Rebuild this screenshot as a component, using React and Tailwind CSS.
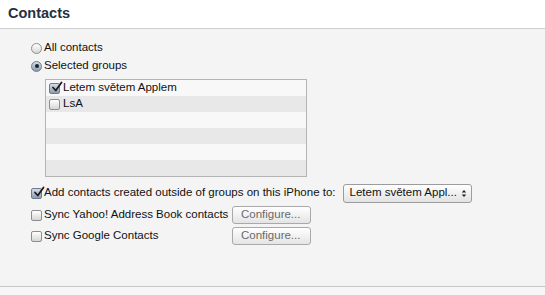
const font = { fontFamily: '"Liberation Sans", Arial, sans-serif' }

const Radio = ({ checked }) => (
  <span
    className={
      'flex h-[11px] w-[11px] shrink-0 items-center justify-center rounded-full border ' +
      (checked
        ? 'border-[#6f7c8c] bg-gradient-to-b from-[#d5dde7] to-[#8d9cb0]'
        : 'border-[#8e8e8e] bg-gradient-to-b from-white to-[#d6d6d6]')
    }
  >
    {checked && <span className="h-[4px] w-[4px] rounded-full bg-[#1c2430]" />}
  </span>
)

const Checkbox = ({ checked }) => (
  <span
    className={
      'relative flex h-[11px] w-[11px] shrink-0 items-center justify-center rounded-[2px] border ' +
      (checked
        ? 'border-[#6f7c8c] bg-gradient-to-b from-[#d5dde7] to-[#8d9cb0]'
        : 'border-[#8e8e8e] bg-gradient-to-b from-white to-[#d6d6d6]')
    }
  >
    {checked && (
      <svg viewBox="0 0 12 12" className="absolute -top-[3px] left-[1px] h-[12px] w-[12px]">
        <path d="M2 6.5 L4.8 9.5 L10.5 1.5" fill="none" stroke="#1a1a1a" strokeWidth="1.8" strokeLinecap="round" strokeLinejoin="round" />
      </svg>
    )}
  </span>
)

const Button = ({ children }) => (
  <button className="flex h-[18px] w-[79px] items-center rounded-[3px] border border-[#a9a9a9] bg-gradient-to-b from-white to-[#e4e4e4] pl-[8px] text-[11.5px] text-[#6a6a6a]">
    {children}
  </button>
)

const rows = [
  { label: 'Letem světem Applem', checked: true },
  { label: 'LsA', checked: false },
  null,
  null,
  null,
  null,
]

export default function App() {
  return (
    <div className="flex h-[295px] w-[545px] flex-col bg-[#f4f4f4] text-[#111]" style={font}>
      <header className="flex h-[29px] items-center border-b border-[#cfcfcf] bg-white pl-[8px]">
        <h1 className="text-[14.5px] font-bold text-[#243141]">Contacts</h1>
      </header>

      <main className="flex flex-1 flex-col pl-[31px] pt-[10px] text-[11.5px]">
        <label className="flex h-[18px] items-center gap-[2px]">
          <Radio />
          <span>All contacts</span>
        </label>
        <label className="flex h-[18px] items-center gap-[2px]">
          <Radio checked />
          <span>Selected groups</span>
        </label>

        <div className="ml-[14px] mt-[4px] w-[262px] border border-[#b4b4b4]">
          {rows.map((r, i) => (
            <div
              key={i}
              className={
                'flex h-[16px] items-center gap-[3px] pl-[3px] ' +
                (i % 2 === 0 ? 'bg-[#f8f8f8]' : 'bg-[#e8e8e8]')
              }
            >
              {r && (
                <>
                  <Checkbox checked={r.checked} />
                  <span>{r.label}</span>
                </>
              )}
            </div>
          ))}
        </div>

        <div className="mt-[6px] flex h-[20px] items-center">
          <Checkbox checked />
          <span className="ml-[2px]">Add contacts created outside of groups on this iPhone to:</span>
          <button className="ml-[7px] flex h-[19px] w-[129px] items-center justify-between rounded-[3px] border border-[#9c9c9c] bg-gradient-to-b from-white to-[#e2e2e2] pl-[6px] pr-[4px] text-[11.5px] text-[#111]">
            <span>Letem světem Appl...</span>
            <svg viewBox="0 0 6 10" className="h-[9px] w-[6px]">
              <path d="M0.5 4 L3 1 L5.5 4 Z M0.5 6 L3 9 L5.5 6 Z" fill="#222" />
            </svg>
          </button>
        </div>

        <div className="mt-[2px] flex h-[20px] items-center">
          <div className="flex w-[201px] items-center gap-[2px]">
            <Checkbox />
            <span>Sync Yahoo! Address Book contacts</span>
          </div>
          <Button>Configure...</Button>
        </div>

        <div className="mt-[1px] flex h-[20px] items-center">
          <div className="flex w-[201px] items-center gap-[2px]">
            <Checkbox />
            <span>Sync Google Contacts</span>
          </div>
          <Button>Configure...</Button>
        </div>
      </main>

      <footer className="h-[9px] border-t border-[#c6c6c6] bg-[#f6f6f6]" />
    </div>
  )
}
